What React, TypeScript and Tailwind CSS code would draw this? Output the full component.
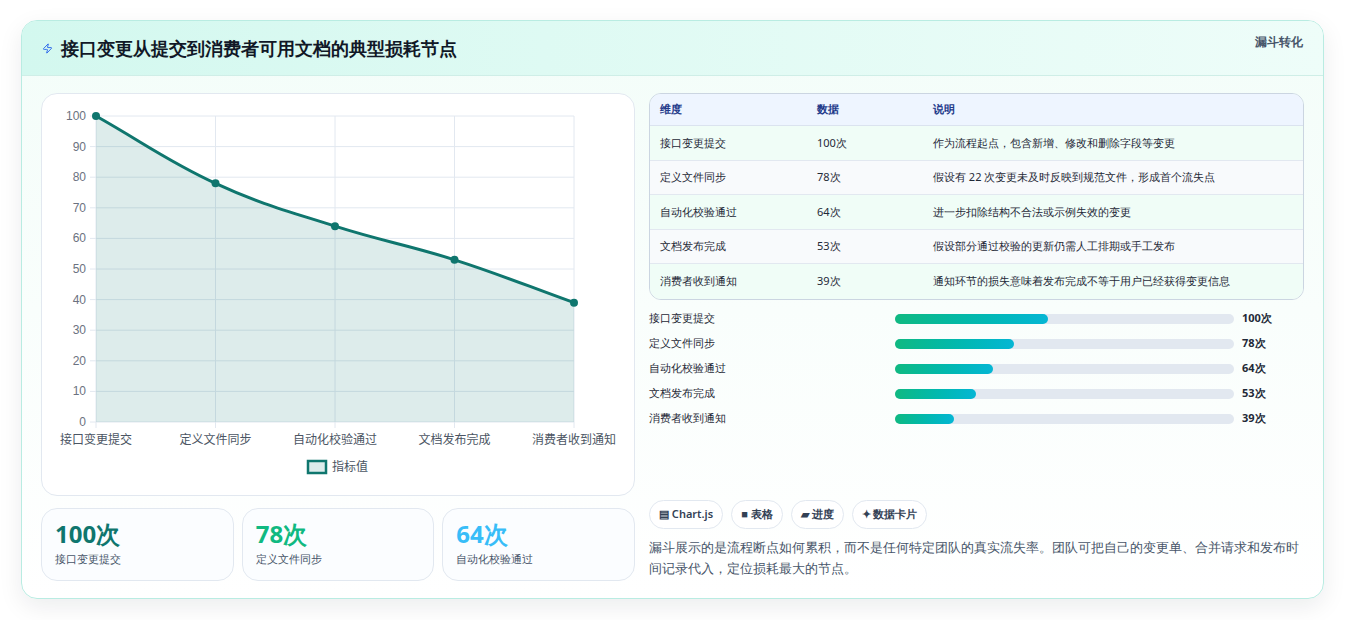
import { Zap } from "lucide-react";

const rows = [
  { name: "接口变更提交", value: 100, note: "作为流程起点，包含新增、修改和删除字段等变更" },
  { name: "定义文件同步", value: 78, note: "假设有 22 次变更未及时反映到规范文件，形成首个流失点" },
  { name: "自动化校验通过", value: 64, note: "进一步扣除结构不合法或示例失效的变更" },
  { name: "文档发布完成", value: 53, note: "假设部分通过校验的更新仍需人工排期或手工发布" },
  { name: "消费者收到通知", value: 39, note: "通知环节的损失意味着发布完成不等于用户已经获得变更信息" },
];

function Chart() {
  // plot area in svg coords
  const x0 = 54, x1 = 532, y0 = 22, y1 = 328;
  const xs = rows.map((_, i) => x0 + ((x1 - x0) / 4) * i);
  const ys = rows.map((r) => y1 - ((y1 - y0) * r.value) / 100);
  let d = `M${xs[0]},${ys[0]}`;
  for (let i = 1; i < xs.length; i++) {
    const cx = (xs[i] - xs[i - 1]) * 0.4;
    const s0 = i > 1 ? (ys[i] - ys[i - 2]) / (xs[i] - xs[i - 2]) : (ys[1] - ys[0]) / (xs[1] - xs[0]);
    const s1 = i < xs.length - 1 ? (ys[i + 1] - ys[i - 1]) / (xs[i + 1] - xs[i - 1]) : (ys[i] - ys[i - 1]) / (xs[i] - xs[i - 1]);
    d += ` C${xs[i - 1] + cx},${ys[i - 1] + s0 * cx} ${xs[i] - cx},${ys[i] - s1 * cx} ${xs[i]},${ys[i]}`;
  }
  const area = `${d} L${x1},${y1} L${x0},${y1} Z`;
  return (
    <svg width="592" height="400" className="block">
      {Array.from({ length: 11 }).map((_, i) => {
        const y = y1 - ((y1 - y0) * i) / 10;
        return (
          <g key={i}>
            <line x1={x0 - 6} x2={x1} y1={y} y2={y} stroke="#e2e8f0" />
            <text x={x0 - 10} y={y + 4} textAnchor="end" fontSize="12" fill="#6b7280" fontFamily="Liberation Sans, sans-serif">
              {i * 10}
            </text>
          </g>
        );
      })}
      {xs.map((x, i) => (
        <g key={i}>
          <line x1={x} x2={x} y1={y0} y2={y1 + 6} stroke="#e2e8f0" />
          <text x={x} y={y1 + 22} textAnchor="middle" fontSize="12" fill="#4b5563" fontFamily="Noto Sans CJK SC, sans-serif">
            {rows[i].name}
          </text>
        </g>
      ))}
      <path d={area} fill="rgba(15,118,110,0.14)" />
      <path d={d} fill="none" stroke="#0f766e" strokeWidth="3" />
      {xs.map((x, i) => (
        <circle key={i} cx={x} cy={ys[i]} r="4" fill="#0f766e" />
      ))}
      <rect x="266" y="367" width="18" height="12" fill="rgba(15,118,110,0.14)" stroke="#0f766e" strokeWidth="2.5" />
      <text x="290" y="377" fontSize="12" fill="#4b5563" fontFamily="Noto Sans CJK SC, sans-serif">指标值</text>
    </svg>
  );
}

export default function App() {
  return (
    <div className="min-h-[620px] bg-white px-[21px] pt-[20px] font-['Noto_Sans_CJK_SC',sans-serif] text-[#1f2937]">
      <div className="w-[1303px] h-[579px] rounded-2xl border border-[#b9ece2] bg-gradient-to-b from-[#f3fdf9] to-white shadow-[0_8px_24px_rgba(15,23,42,0.08)] overflow-hidden">
        {/* Header */}
        <div className="flex items-center justify-between h-[55px] px-5 bg-gradient-to-r from-[#d3f8ef] to-[#eefdf9] border-b border-[#cfeee7]">
          <div className="flex items-center gap-2">
            <Zap size={11} className="text-[#2563eb]" />
            <h1 className="text-[18px] font-bold text-[#111827]">接口变更从提交到消费者可用文档的典型损耗节点</h1>
          </div>
          <span className="text-[12px] font-semibold text-[#475569] -mt-3">漏斗转化</span>
        </div>
        <div className="flex gap-[14px] px-[19px] pt-[17px]">
          {/* Left */}
          <div className="w-[594px]">
            <div className="h-[403px] rounded-2xl border border-[#e2e8f0] bg-white">
              <Chart />
            </div>
            <div className="grid grid-cols-3 gap-[8px] mt-[12px]">
              {[
                { v: "100次", c: "text-[#0f766e]", l: "接口变更提交" },
                { v: "78次", c: "text-[#10b981]", l: "定义文件同步" },
                { v: "64次", c: "text-[#38bdf8]", l: "自动化校验通过" },
              ].map((s) => (
                <div key={s.l} className="h-[73px] rounded-2xl border border-[#e2e8f0] bg-[#fbfdff] px-[13px] pt-[9px]">
                  <div className={`text-[24px] font-bold leading-[32px] ${s.c}`}>{s.v}</div>
                  <div className="text-[11px] text-[#475569] mt-[1px]">{s.l}</div>
                </div>
              ))}
            </div>
          </div>
          {/* Right */}
          <div className="w-[658px]">
            <div className="rounded-xl border border-[#cbd5e1] overflow-hidden text-[11px]">
              <div className="grid grid-cols-[157px_116px_1fr] h-[32px] items-center bg-[#eef5ff] font-semibold text-[#1e3a8a] px-[10px] border-b border-[#dbe3ef]">
                <span>维度</span><span>数据</span><span>说明</span>
              </div>
              {rows.map((r, i) => (
                <div
                  key={r.name}
                  className={`grid grid-cols-[157px_116px_1fr] h-[34.5px] items-center px-[10px] text-[#1f2937] ${i % 2 === 0 ? "bg-[#f0fdf7]" : "bg-[#f8fafc]"} ${i < 4 ? "border-b border-[#e2e8f0]" : ""}`}
                >
                  <span>{r.name}</span><span>{r.value}次</span><span>{r.note}</span>
                </div>
              ))}
            </div>
            <div className="mt-[10px] flex flex-col gap-[7px] text-[11px]">
              {rows.map((r) => (
                <div key={r.name} className="flex items-center h-[18px]">
                  <span className="w-[246px] text-[#1f2937]">{r.name}</span>
                  <div className="w-[339px] h-[10px] rounded-full bg-[#e2e8f0]">
                    <div className="h-full rounded-full bg-gradient-to-r from-[#10b981] to-[#06b6d4]" style={{ width: `${r.value * 0.45}%` }} />
                  </div>
                  <span className="ml-[8px] font-bold text-[#1f2937]">{r.value}次</span>
                </div>
              ))}
            </div>
            <div className="mt-[72px] flex gap-[8px] text-[11px] font-semibold text-[#334155]">
              {["▤ Chart.js", "■ 表格", "▰ 进度", "✦ 数据卡片"].map((c) => (
                <span key={c} className="h-[29px] px-[9px] flex items-center rounded-full border border-[#e2e8f0] bg-white">{c}</span>
              ))}
            </div>
            <p className="mt-[8px] text-[12.5px] leading-[21px] text-[#475569]">
              漏斗展示的是流程断点如何累积，而不是任何特定团队的真实流失率。团队可把自己的变更单、合并请求和发布时间记录代入，定位损耗最大的节点。
            </p>
          </div>
        </div>
      </div>
    </div>
  );
}
